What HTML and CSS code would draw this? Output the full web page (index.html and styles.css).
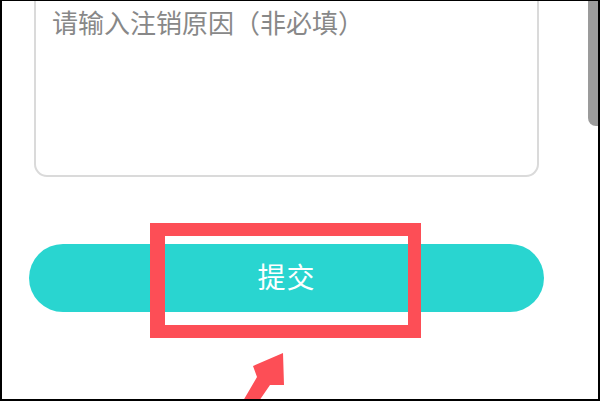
FILE: index.html
```html
<!DOCTYPE html>
<html lang="zh-CN">
<head>
    <meta charset="UTF-8">
    <meta name="viewport" content="width=device-width, initial-scale=1.0">
    <title>注销账号</title>
    <link rel="stylesheet" href="styles.css">
</head>
<body>

    <div class="frame">
        <!-- Reason input, its top is scrolled out of view -->
        <textarea class="reason" placeholder="请输入注销原因（非必填）"></textarea>

        <button class="submit-btn" type="button">提交</button>

        <!-- Page scrollbar -->
        <div class="scrollbar"></div>

        <!-- Annotation: red box and arrow over the button -->
        <div class="mark-box"></div>
        <svg class="mark-arrow" width="60" height="60" viewBox="0 0 60 60">
            <polygon points="41,0 42,32 28,32 17,48 1,48 15,24 11,13" fill="#fd4e56"/>
        </svg>
    </div>

</body>
</html>
```

FILE: styles.css
```css
* {
    box-sizing: border-box;
}

body {
    margin: 0;
    background-color: #fff;
    font-family: 'Noto Sans CJK SC', 'Noto Sans', sans-serif;
}

.frame {
    position: relative;
    width: 600px;
    height: 401px;
    overflow: hidden;
    border: 2px solid #000;
    border-top-width: 1px;
    padding-left: 27px;
    display: flex;
    flex-direction: column;
    align-items: flex-start;
}

.reason {
    display: block;
    width: 505px;
    height: 198px;
    margin: -22px 0 0 5px;
    padding: 24px 16px 0 16px;
    border: 2px solid #dadada;
    border-radius: 13px;
    resize: none;
    outline: none;
    font-family: inherit;
    font-size: 26px;
    line-height: 34px;
    color: #333;
}

.reason::placeholder {
    color: #888;
}

.submit-btn {
    width: 515px;
    height: 68px;
    margin-top: 67px;
    padding-bottom: 5px;
    border: none;
    border-radius: 34px;
    background-color: #29d5d0;
    color: #fff;
    font-family: inherit;
    font-size: 28px;
    letter-spacing: 1px;
    cursor: pointer;
}

.scrollbar {
    position: absolute;
    top: 0;
    right: 0;
    width: 10px;
    height: 125px;
    background-color: #9b9b9b;
    border-bottom-left-radius: 8px;
}

.mark-box {
    position: absolute;
    left: 148px;
    top: 222px;
    width: 271px;
    height: 115px;
    border: 13px solid #fd4e56;
    border-left-width: 15px;
}

.mark-arrow {
    position: absolute;
    left: 240px;
    top: 352px;
}
```
